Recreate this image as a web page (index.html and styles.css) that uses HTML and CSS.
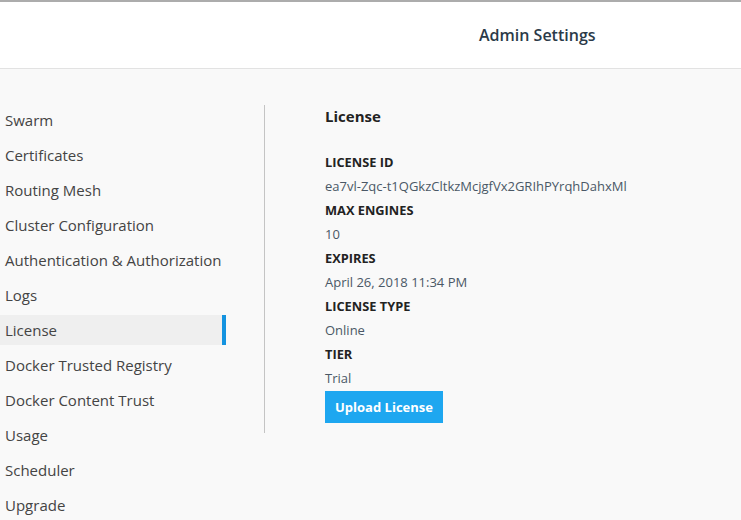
FILE: index.html
```html
<!DOCTYPE html>
<html>
<head>
<meta charset="utf-8">
<link rel="stylesheet" href="styles.css">
</head>
<body>
<header class="topbar">
  <h1 class="page-title">Admin Settings</h1>
</header>
<main class="layout">
  <nav class="sidebar">
    <a class="nav-item">Swarm</a>
    <a class="nav-item">Certificates</a>
    <a class="nav-item">Routing Mesh</a>
    <a class="nav-item">Cluster Configuration</a>
    <a class="nav-item">Authentication &amp; Authorization</a>
    <a class="nav-item">Logs</a>
    <a class="nav-item active">License</a>
    <a class="nav-item">Docker Trusted Registry</a>
    <a class="nav-item">Docker Content Trust</a>
    <a class="nav-item">Usage</a>
    <a class="nav-item">Scheduler</a>
    <a class="nav-item">Upgrade</a>
  </nav>
  <section class="content">
    <h2 class="section-title">License</h2>
    <dl class="details">
      <dt>LICENSE ID</dt>
      <dd>ea7vl-Zqc-t1QGkzCltkzMcjgfVx2GRIhPYrqhDahxMl</dd>
      <dt>MAX ENGINES</dt>
      <dd>10</dd>
      <dt>EXPIRES</dt>
      <dd>April 26, 2018 11:34 PM</dd>
      <dt>LICENSE TYPE</dt>
      <dd>Online</dd>
      <dt>TIER</dt>
      <dd>Trial</dd>
    </dl>
    <button class="btn-primary">Upload License</button>
  </section>
</main>
</body>
</html>
```
FILE: styles.css
```css
html, body {
  margin: 0;
  padding: 0;
}
body {
  background: #f9f9f9;
  font-family: "Open Sans", "Liberation Sans", sans-serif;
  color: #333;
  height: 520px;
  overflow: hidden;
}
.topbar {
  background: #fff;
  border-top: 2px solid #acacac;
  border-bottom: 1px solid #e2e2e2;
  display: flex;
  align-items: center;
  padding-left: 479px;
  box-sizing: border-box;
  height: 69px;
}
.page-title {
  margin: 0;
  font-size: 16px;
  font-weight: 600;
  color: #2b3a48;
}
.layout {
  display: flex;
  align-items: flex-start;
  padding-top: 36px;
}
.sidebar {
  width: 226px;
  margin-right: 38px;
  display: flex;
  flex-direction: column;
  gap: 5px;
}
.nav-item {
  display: block;
  height: 30px;
  line-height: 30px;
  padding-left: 5px;
  font-size: 15px;
  color: #444;
  width: 222px;
  box-sizing: border-box;
}
.nav-item.active {
  background: #efefef;
  border-right: 4px solid #1493e0;
  width: 226px;
}
.content {
  border-left: 1px solid #c4c4c4;
  padding: 1px 0 10px 60px;
}
.section-title {
  margin: 0 0 24px;
  font-size: 15px;
  line-height: 20px;
  font-weight: 700;
  color: #222;
}
.details {
  margin: 0;
}
.details dt {
  font-size: 12.8px;
  font-weight: 700;
  line-height: 24px;
  color: #222;
}
.details dd {
  margin: 0;
  font-size: 13px;
  line-height: 24px;
  color: #4a5866;
}
.btn-primary {
  margin-top: 1px;
  display: block;
  width: 118px;
  height: 32px;
  border: none;
  background: #1ea7f0;
  color: #fff;
  font-family: "Open Sans", "Liberation Sans", sans-serif;
  font-weight: 700;
  font-size: 13px;
  padding: 0;
}
```
